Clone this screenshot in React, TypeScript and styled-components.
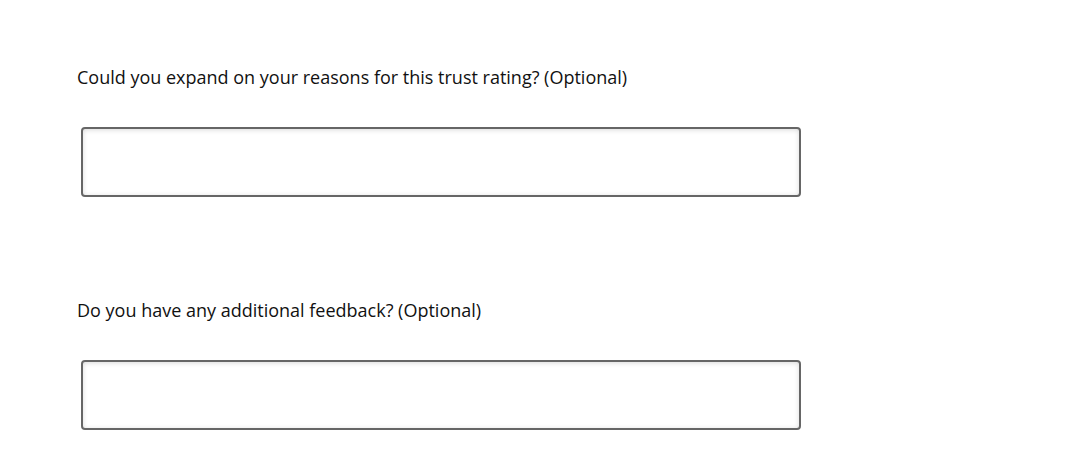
import { createGlobalStyle } from 'styled-components'
import styled from 'styled-components'

const GlobalStyle = createGlobalStyle`
  body {
    margin: 0;
    background: #ffffff;
    font-family: 'Open Sans', 'Liberation Sans', sans-serif;
    color: #111;
    overflow: hidden;
  }
`

const Page = styled.div`
  padding: 65px 0 0 77px;
  display: flex;
  flex-direction: column;
  gap: 101px;
`

const Question = styled.div`
  display: flex;
  flex-direction: column;
`

const Label = styled.label`
  font-size: 18px;
  line-height: 24px;
  margin-bottom: 38px;
`

const Field = styled.textarea`
  box-sizing: border-box;
  width: 720px;
  height: 70px;
  margin-left: 4px;
  border: 2px solid #666;
  border-radius: 4px;
  box-shadow: inset 0 1px 5px rgba(0, 0, 0, 0.15);
  background: #fff;
  resize: none;
  font-family: inherit;
  font-size: 16px;
  padding: 8px;
  outline: none;
`

export default function App() {
  return (
    <>
      <GlobalStyle />
      <Page>
        <Question>
          <Label>Could you expand on your reasons for this trust rating? (Optional)</Label>
          <Field />
        </Question>
        <Question>
          <Label>Do you have any additional feedback? (Optional)</Label>
          <Field />
        </Question>
      </Page>
    </>
  )
}
